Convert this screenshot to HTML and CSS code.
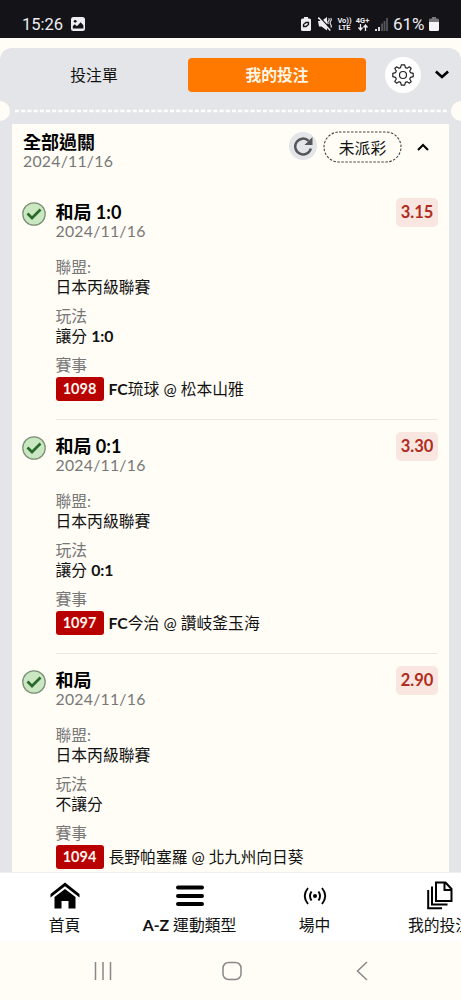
FILE: index.html
```html
<!DOCTYPE html>
<html lang="zh-Hant">
<head>
    <meta charset="UTF-8">
    <meta name="viewport" content="width=device-width, initial-scale=1">
    <title>我的投注</title>
    <link rel="stylesheet" href="styles.css">
</head>
<body>
    <div class="status-bar">
        <span class="time">15:26</span>
        <svg class="pic" width="14" height="14" viewBox="0 0 14 14"><rect width="14" height="14" rx="2.5" fill="#eeeef2"/><circle cx="4.200" cy="4.300" r="1.400" fill="#131318"/><path d="M1.800 11.500V9l2-1.800L6 9.200l3.600-4 2.800 3v3.300z" fill="#131318"/></svg>
        <div class="status-right">
            <svg width="10" height="14" viewBox="0 0 10 14"><path d="M3 0h4v1.500h1.500Q10 1.500 10 3v9.500Q10 14 8.500 14h-7Q0 14 0 12.500V3q0-1.500 1.500-1.500H3z" fill="#eeeef2"/><path d="M2.500 9.500V7.500L5 5.500h2.500v2L5 9.500z" fill="none" stroke="#131318" stroke-width="1.300"/></svg>
            <svg class="mute" width="14" height="14" viewBox="0 0 14 14"><path d="M0 4h3.500L9 0v13.500L3.500 9.500H1z" fill="#eeeef2"/><path d="M1.500 0l12 13" stroke="#131318" stroke-width="1.300"/><path d="M.3.500l12 13" stroke="#eeeef2" stroke-width="1.500"/><path d="M10.500 1.500q1.500 1 0 2.500t0 3M12.700 1q1.200 1.500 0 3t0 3.500 0 3" fill="none" stroke="#eeeef2" stroke-width="1.100"/></svg>
            <span class="net">Vo))<br>LTE</span>
            <span class="net net-4g">4G+<br><svg width="10" height="7" viewBox="0 0 10 7"><path d="M2.500 0v5.500M.5 3.500l2 2.500 2-2.500M7.500 7V1.500M5.500 3.500l2-2.500 2 2.500" fill="none" stroke="#eeeef2" stroke-width="1.300"/></svg></span>
            <svg class="signal" width="13" height="13" viewBox="0 0 13 13"><path d="M1 13v-2M4 13V9" stroke="#eeeef2" stroke-width="1.800"/><path d="M7 13V5.500M9.500 13V3M12 13V0" stroke="#55555a" stroke-width="1.800"/></svg>
            <span class="percent">61%</span>
            <svg class="battery" width="10" height="14" viewBox="0 0 10 14"><path d="M3 0h4v1.500h1.500Q10 1.500 10 3v3H0V3q0-1.500 1.500-1.500H3z" fill="#77777c"/><path d="M0 5h10v7.500Q10 14 8.500 14h-7Q0 14 0 12.500z" fill="#f5f5f8"/></svg>
        </div>
    </div>

    <div class="panel">
        <div class="tabs">
            <div class="tab">投注單</div>
            <div class="tab active">我的投注</div>
            <div class="gear">
                <svg width="22" height="22" viewBox="0 0 22 22" fill="none" stroke="#222" stroke-width="1.200" stroke-linejoin="round"><path d="M9.300.8h3.400l.7 2.800 1.600.7L17.500 2.800l1.700 1.700-1.500 2.500.7 1.600 2.800.7v3.400l-2.800.7-.7 1.600 1.500 2.500-1.700 1.700-2.500-1.500-1.600.7-.7 2.800H9.300l-.7-2.800-1.600-.7-2.500 1.500-1.700-1.700 1.500-2.500-.7-1.600-2.800-.7V9.300l2.800-.7.7-1.600-1.500-2.500 1.700-1.700L7 4.300l1.600-.7z"/><circle cx="11" cy="11" r="3.500"/></svg>
            </div>
            <svg class="chevron" width="14" height="9" viewBox="0 0 14 9"><path d="M.9 1.500L7 7l6.100-5.500" fill="none" stroke="#000" stroke-width="2.600"/></svg>
        </div>
        <div class="tear">
            <span class="notch"></span>
            <svg class="dots" width="435" height="4"><path d="M2 2h432" stroke="#fff" stroke-width="2.400" stroke-dasharray="4 2.200"/></svg>
            <span class="notch"></span>
        </div>

        <div class="card">
            <div class="card-head">
                <div class="card-title">
                    <div class="title">全部過關</div>
                    <div class="date">2024/11/16</div>
                </div>
                <div class="refresh">
                    <svg width="20" height="20" viewBox="0 0 20 20"><path d="M15.600 4.800A7.900 7.900 0 1 0 17.800 12.500" fill="none" stroke="#55565a" stroke-width="2.500"/><path d="M19.500 1v8h-8z" fill="#55565a"/></svg>
                </div>
                <div class="pending"><svg width="79" height="32"><rect x="1" y="1" width="77" height="30" rx="15" fill="none" stroke="#444" stroke-width="1.100" stroke-dasharray="2.500 1.500"/></svg><span>未派彩</span></div>
                <svg class="fold" width="12" height="8" viewBox="0 0 12 8"><path d="M1 7l5-5 5 5" fill="none" stroke="#000" stroke-width="2"/></svg>
            </div>

            <div class="bet">
                <svg class="check" width="24" height="24" viewBox="0 0 24 24"><circle cx="12" cy="12" r="11.200" fill="#c9e8c2" stroke="#7d9279" stroke-width="1.300"/><path d="M5.500 11.500l4.500 4.500 8.500-8.500" fill="none" stroke="#2b682b" stroke-width="2.700"/></svg>
                <div class="bet-body">
                    <div class="title">和局 1:0</div>
                    <div class="date">2024/11/16</div>
                    <div class="field first"><div class="label">聯盟:</div><div class="value">日本丙級聯賽</div></div>
                    <div class="field"><div class="label">玩法</div><div class="value">讓分 <b>1:0</b></div></div>
                    <div class="field"><div class="label">賽事</div><div class="match"><span class="code">1098</span><b>FC</b>琉球 @ 松本山雅</div></div>
                    <span class="odds">3.15</span>
                </div>
            </div>

            <div class="bet">
                <svg class="check" width="24" height="24" viewBox="0 0 24 24"><circle cx="12" cy="12" r="11.200" fill="#c9e8c2" stroke="#7d9279" stroke-width="1.300"/><path d="M5.500 11.500l4.500 4.500 8.500-8.500" fill="none" stroke="#2b682b" stroke-width="2.700"/></svg>
                <div class="bet-body">
                    <div class="title">和局 0:1</div>
                    <div class="date">2024/11/16</div>
                    <div class="field first"><div class="label">聯盟:</div><div class="value">日本丙級聯賽</div></div>
                    <div class="field"><div class="label">玩法</div><div class="value">讓分 <b>0:1</b></div></div>
                    <div class="field"><div class="label">賽事</div><div class="match"><span class="code">1097</span><b>FC</b>今治 @ 讚岐釜玉海</div></div>
                    <span class="odds">3.30</span>
                </div>
            </div>

            <div class="bet">
                <svg class="check" width="24" height="24" viewBox="0 0 24 24"><circle cx="12" cy="12" r="11.200" fill="#c9e8c2" stroke="#7d9279" stroke-width="1.300"/><path d="M5.500 11.500l4.500 4.500 8.500-8.500" fill="none" stroke="#2b682b" stroke-width="2.700"/></svg>
                <div class="bet-body">
                    <div class="title">和局</div>
                    <div class="date">2024/11/16</div>
                    <div class="field first"><div class="label">聯盟:</div><div class="value">日本丙級聯賽</div></div>
                    <div class="field"><div class="label">玩法</div><div class="value">不讓分</div></div>
                    <div class="field"><div class="label">賽事</div><div class="match"><span class="code">1094</span>長野帕塞羅 @ 北九州向日葵</div></div>
                    <span class="odds">2.90</span>
                </div>
            </div>
        </div>
    </div>

    <div class="bottom-nav">
        <div class="nav-item">
            <svg width="30" height="30" viewBox="0 0 30 30"><path d="M.5 13L15 1.500 29.500 13v3.500L15 5.300.5 16.500z"/><path d="M4.500 16L15 8l10.500 8v11.500H18.500V20h-7v7.500h-7z"/></svg>
            <span>首頁</span>
        </div>
        <div class="nav-item">
            <svg width="30" height="30" viewBox="0 0 30 30"><path d="M3 6.500h24M3 15h24M3 23h24" stroke="#000" stroke-width="4" stroke-linecap="round"/></svg>
            <span><b>A-Z</b> 運動類型</span>
        </div>
        <div class="nav-item">
            <svg width="30" height="30" viewBox="0 0 30 30" fill="none" stroke="#000" stroke-width="1.900"><circle cx="15" cy="15" r="2" fill="#000" stroke="none"/><path d="M11.500 10.500q-3 4.500 0 9M18.500 10.500q3 4.500 0 9M8 7q-6.500 8 0 16M22 7q6.500 8 0 16"/></svg>
            <span>場中</span>
        </div>
        <div class="nav-item">
            <svg width="30" height="30" viewBox="0 0 30 30" fill="none" stroke="#000" stroke-width="2"><path d="M11 1.500h9.500l6 6.500v12H11zM19.500 2v7h7M7 5.500v18h15.500M3.200 9v18.200H17"/></svg>
            <span>我的投注</span>
        </div>
    </div>

    <div class="system-nav">
        <svg width="18" height="20" viewBox="0 0 18 20"><path d="M1.500 1v18M9 1v18M16.500 1v18"/></svg>
        <svg width="20" height="20" viewBox="0 0 20 20"><rect x="1" y="1.500" width="18" height="17" rx="5.500"/></svg>
        <svg width="12" height="20" viewBox="0 0 12 20"><path d="M11 1L1.500 10l9.500 9"/></svg>
    </div>
</body>
</html>
```
FILE: styles.css
```css
*{
    margin: 0;
    padding: 0;
    box-sizing: border-box;
}
body{
    width: 461px;
    height: 1000px;
    overflow: hidden;
    display: flex;
    flex-direction: column;
    background: #fffdf6;
    color: #111;
    font-family: Lato, "Noto Sans CJK TC", sans-serif;
    font-size: 15.800px;
}
svg{
    display: block;
    flex: none;
}
b{
    font-weight: 700;
}

/* status bar */
.status-bar{
    height: 38px;
    flex: none;
    display: flex;
    align-items: center;
    padding: 10px 22px 0;
    background: #131318;
    color: #eeeef2;
    font-family: Roboto, sans-serif;
}
.time{
    width: 42px;
    font-size: 16.500px;
}
.pic{
    margin-left: 7px;
}
.status-right{
    display: flex;
    align-items: center;
    margin-left: auto;
}
.mute{
    margin-left: 7px;
}
.net{
    width: 15px;
    margin-left: 5px;
    font-size: 7.500px;
    font-weight: 700;
    line-height: 7px;
    text-align: center;
}
.net-4g{
    margin-left: 3px;
}
.net svg{
    margin: 0 auto;
}
.signal{
    margin: 0 5px;
}
.percent{
    font-size: 17px;
    width: 34px;
}
.battery{
    margin-left: 2px;
}

/* panel */
.panel{
    height: 824px;
    margin-top: 10px;
    flex: none;
    overflow: hidden;
    border-radius: 12px 12px 0 0;
    background: #e4e5e8;
}
.tabs{
    height: 53px;
    display: flex;
    align-items: center;
}
.tab{
    width: 188px;
    height: 34px;
    line-height: 34px;
    text-align: center;
}
.tab.active{
    width: 178px;
    border-radius: 4px;
    background: #ff7800;
    color: #fff6e6;
    font-weight: 700;
}
.gear{
    width: 36px;
    height: 36px;
    margin-left: 19px;
    display: flex;
    align-items: center;
    justify-content: center;
    border-radius: 50%;
    background: #fff;
}
.chevron{
    margin-left: 14px;
}
.tear{
    height: 20px;
    display: flex;
    align-items: center;
    justify-content: space-between;
}
.notch{
    width: 10px;
    height: 20px;
    border-radius: 0 10px 10px 0;
    background: #fffdf6;
}
.notch:last-child{
    border-radius: 10px 0 0 10px;
}

/* card */
.card{
    height: 748px;
    margin: 3px 12px 0;
    background: #fffdf6;
}
.card-head{
    height: 62px;
    display: flex;
    align-items: flex-start;
    padding: 8px 20px 0 11px;
}
.title{
    height: 20px;
    line-height: 20px;
    font-size: 18px;
    font-weight: 700;
    color: #000;
}
.date{
    height: 19px;
    line-height: 17px;
    color: #777;
    letter-spacing: .25px;
}
.refresh{
    width: 28px;
    height: 28px;
    margin-left: auto;
    display: flex;
    align-items: center;
    justify-content: center;
    border-radius: 50%;
    background: #e4e5e8;
}
.pending{
    display: grid;
    margin: -1px 0 0 6px;
    place-items: center;
}
.pending svg,.pending span{
    grid-area: 1 / 1;
}
.fold{
    margin: 11px 0 0 15px;
}
.bet{
    display: flex;
    padding: 0 12px 0 10px;
}
.check{
    margin: 16px 9.500px 0 0;
}
.bet-body{
    position: relative;
    flex: 1;
    height: 234px;
    padding-top: 16px;
}
.bet:not(:last-child) .bet-body{
    border-bottom: 1px solid #e8e7e3;
}
.field{
    margin-top: 10px;
}
.field.first{
    margin-top: 16px;
}
.label,.value{
    height: 19.600px;
    line-height: 19.600px;
}
.label{
    color: #777;
}
.match{
    display: flex;
    align-items: center;
    height: 24px;
    margin-top: 2px;
    white-space: pre;
}
.code{
    width: 48px;
    height: 24px;
    margin-right: 5px;
    border-radius: 3px;
    background: #b90000;
    color: #fff6ee;
    font-size: 14.500px;
    font-weight: 700;
    line-height: 24px;
    text-align: center;
}
.odds{
    position: absolute;
    top: 12px;
    right: -1px;
    width: 42px;
    height: 29px;
    border-radius: 5px;
    background: #f9e6e0;
    color: #b02c20;
    font-size: 16.500px;
    font-weight: 700;
    line-height: 29px;
    text-align: center;
}

/* bottom bars */
.bottom-nav{
    height: 69px;
    flex: none;
    display: flex;
    padding-left: 2px;
    border-top: 1px solid #eee;
    background: #fff;
}
.nav-item{
    width: 125px;
    flex: none;
    display: flex;
    flex-direction: column;
    align-items: center;
    padding-top: 8px;
    white-space: nowrap;
}
.nav-item span{
    line-height: 28px;
}
.system-nav{
    flex: 1;
    display: flex;
    align-items: center;
    padding-left: 94px;
    gap: 110px;
}
.system-nav svg{
    fill: none;
    stroke: #888;
    stroke-width: 1.500;
}
.system-nav svg:last-child{
    margin-left: 4px;
}
```
